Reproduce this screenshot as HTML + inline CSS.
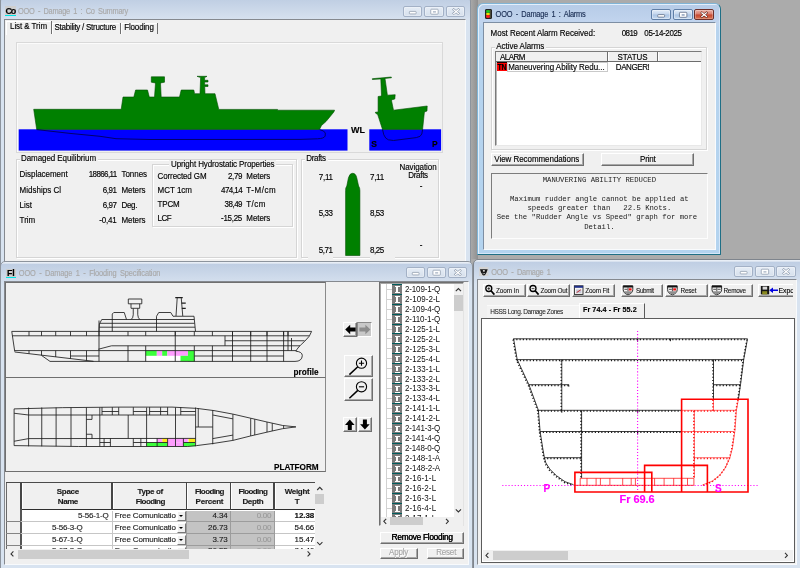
<!DOCTYPE html>
<html><head><meta charset="utf-8"><title>Damage Control</title>
<style>
html,body{margin:0;padding:0;}
body{width:800px;height:568px;overflow:hidden;background:#ababab;position:relative;font-family:"Liberation Sans",sans-serif;font-size:8px;line-height:10px;color:#000;}
div,svg{box-sizing:border-box;}
.t{position:absolute;white-space:nowrap;line-height:10px;-webkit-text-stroke:0.14px currentColor;}
.win{position:absolute;overflow:hidden;}
.frameI{background:linear-gradient(#e8eef6 0,#e8eef6 1.2px,#bfcee3 2px,#d5e0ee 21px,#d8e3f0 24px,#d8e3f0);border:1px solid #8d949d;border-radius:5px 5px 0 0;}
.frameA{background:linear-gradient(#b6cbe7 0,#c2d5ee 19px,#b7d3ee 24px,#b3d3ef);border:1px solid #3c7f98;border-radius:6px 6px 1px 1px;}
.client{position:absolute;background:#f0f0f0;overflow:hidden;}
.cb{position:absolute;height:11px;border:1px solid #9aa7b8;border-radius:2px;background:linear-gradient(#e9eff7,#d4deea);}
.btn{position:absolute;background:#f0f0f0;border-top:1px solid #fff;border-left:1px solid #fff;border-right:1px solid #6f6f6f;border-bottom:1px solid #6f6f6f;box-shadow:inset -1px -1px 0 #a8a8a8;}
.sunk{position:absolute;border-top:1px solid #828282;border-left:1px solid #828282;border-right:1px solid #fff;border-bottom:1px solid #fff;}
.grp{position:absolute;border:1px solid #d5d5d5;box-shadow:inset 1px 1px 0 #fff, 1px 1px 0 #fff;}
svg{position:absolute;overflow:visible;}
</style></head><body><div id="root" style="position:absolute;left:0;top:0;width:800px;height:568px;overflow:hidden;will-change:transform;">
<div style="position:absolute;left:470.5px;top:0px;width:7px;height:259px;background:linear-gradient(90deg,#a8a8a8,#8f8f8f);"></div>
<div class="win frameI" style="left:0;top:-4px;width:471px;height:270px;"></div>
<div style="position:absolute;left:5px;top:6px;width:10.5px;height:9.5px;background:#cfcfcf;"></div>
<div style="position:absolute;left:5px;top:14.6px;width:10.5px;height:1.4px;background:#00e5e5;"></div>
<div class="t" style="font-size:9px;font-weight:bold;letter-spacing:-1.098px;transform:scaleY(1.1);transform-origin:0 4.9px;left:5.40px;top:6.00px;">Co</div>
<div class="t" style="font-size:7.4px;color:#a9a9a9;word-spacing:1.6px;letter-spacing:-0.256px;transform:scaleY(1.17);transform-origin:0 4.9px;left:18.00px;top:7.00px;">OOO - Damage 1 : Co Summary</div>
<div class="cb" style="left:402.5px;top:5.8px;width:19.5px;height:11px;border-color:#a3b1c6;background:linear-gradient(#e6edf6,#d6e0ec);box-shadow:inset 0 0 0 0.6px rgba(255,255,255,0.55);"></div><div class="cb" style="left:424.2px;top:5.8px;width:19.5px;height:11px;border-color:#a3b1c6;background:linear-gradient(#e6edf6,#d6e0ec);box-shadow:inset 0 0 0 0.6px rgba(255,255,255,0.55);"></div><div class="cb" style="left:445.8px;top:5.8px;width:19.5px;height:11px;border-color:#a3b1c6;background:linear-gradient(#e6edf6,#d6e0ec);box-shadow:inset 0 0 0 0.6px rgba(255,255,255,0.55);"></div><svg style="left:402.5px;top:5.8px;" width="62.8" height="11"><rect x="6.35" y="5.4" width="6.8" height="2.5" rx="0.7" fill="#fff" stroke="#8693a6" stroke-width="0.7"/><rect x="27.75" y="3.2" width="7.4" height="5" rx="0.8" fill="#fff" stroke="#8693a6" stroke-width="0.7"/><rect x="29.95" y="5.1" width="3" height="1.5" fill="#b3bdcb"/><path d="M50.75,3.7 L55.35,7.5 M55.35,3.7 L50.75,7.5" stroke="#8693a6" stroke-width="2.3" stroke-linecap="square" fill="none"/><path d="M50.75,3.7 L55.35,7.5 M55.35,3.7 L50.75,7.5" stroke="#fff" stroke-width="1.25" stroke-linecap="square" fill="none"/></svg>
<div class="client" style="left:4px;top:18.5px;width:461.5px;height:243px;border:1px solid #85898f;border-right-color:#f8fafc;"></div>
<div style="position:absolute;left:6px;top:20.5px;width:45px;height:14px;border-left:1px solid #fff;border-top:1px solid #fff;"></div>
<div style="position:absolute;left:50.6px;top:21px;width:1px;height:12.5px;background:#6e6e6e;"></div>
<div style="position:absolute;left:52.2px;top:22.5px;width:1px;height:11px;background:#fff;"></div>
<div style="position:absolute;left:52.2px;top:22.5px;width:67px;height:1px;background:#fff;"></div>
<div style="position:absolute;left:119.6px;top:22.5px;width:1px;height:11px;background:#6e6e6e;"></div>
<div style="position:absolute;left:121.2px;top:22.5px;width:1px;height:11px;background:#fff;"></div>
<div style="position:absolute;left:121.2px;top:22.5px;width:36px;height:1px;background:#fff;"></div>
<div style="position:absolute;left:157.2px;top:22.5px;width:1px;height:11px;background:#6e6e6e;"></div>
<div class="t" style="font-size:8px;letter-spacing:-0.071px;transform:scaleY(1.17);transform-origin:0 4.9px;left:10.00px;top:22.40px;">List &amp; Trim</div>
<div class="t" style="font-size:8px;letter-spacing:-0.268px;transform:scaleY(1.17);transform-origin:0 4.9px;left:54.50px;top:23.20px;">Stability / Structure</div>
<div class="t" style="font-size:8px;letter-spacing:-0.148px;transform:scaleY(1.17);transform-origin:0 4.9px;left:124.20px;top:23.20px;">Flooding</div>
<div style="position:absolute;left:15.5px;top:42px;width:427.5px;height:111px;border:1px solid #d9d9d9;box-shadow:inset 1px 1px 0 #fbfbfb;"></div>
<svg style="left:0;top:0;" width="470" height="262" viewBox="0 0 470 262"><rect x="18.7" y="129.3" width="328.8" height="21.3" fill="#0000ff"/><rect x="369.3" y="129.3" width="71.8" height="21.3" fill="#0000ff"/><polygon points="33.7,109.3 121.2,109.3 123,97 133.8,97 135.6,90 147.5,90 149.3,97 154.5,97 155.5,83 151.3,82.2 151.3,76.8 164.5,76.8 164.5,82.2 160.5,83 161.2,97 179.5,97 181.2,90 193.8,90 194.6,93.7 200,93.7 200.6,77.6 197,76.3 207,76.3 204.6,77.6 204.6,80.3 208,80.3 208,82 204.6,82 204.6,84.8 208,84.8 208,86.5 204.7,86.5 205,93.7 215,93.7 218.8,109.4 277.5,109.4 277.5,110.2 334.6,110.2 333.8,112 331,115.5 326,121.5 321.5,125.5 319.5,129.4 36.7,129.4" fill="#008000" stroke="#004d00" stroke-width="0.6"/><path d="M36.7,129.6 L70,133.4 L100,136.3 L116,138.7 L150,139.5 L300,139.4 L317.5,138.8 Q324,138.6 325.2,136 Q326.2,132.5 323.5,131 L319.6,129.6" fill="none" stroke="#00005a" stroke-width="0.9"/><polygon points="372.3,78.7 391.3,77 391.4,77.8 385,78.4 387.4,95.2 395.2,94.7 394.8,99 391.4,100 393.5,110.2 427.2,106 427,111 424.4,112 422.6,129.4 382.5,129.4 377.7,114.6 375.4,113 375.5,112.2 378.1,112 378.1,96.5 381.5,96 380.8,78.9 372.4,79.5" fill="#008000" stroke="#004d00" stroke-width="0.6"/><path d="M382.5,129.5 L383.8,134.8 Q385.5,139 388.4,139.8 L393.5,140.5 L416.3,137.6 Q421,136.8 421.8,134 L422.6,129.5" fill="none" stroke="#00005a" stroke-width="0.9"/><path d="M345.6,255.5 L345.6,190.5 Q345.3,188 346.8,186 L348.4,178 Q349.5,173.3 352.6,173.3 Q355.9,173.3 356.8,178 L358.6,186 Q360,188 359.9,190.5 L359.9,255.5 Z" fill="#008000" stroke="#004d00" stroke-width="0.6"/></svg>
<div class="t" style="font-size:9px;font-weight:bold;letter-spacing:0.104px;left:351.00px;top:124.80px;">WL</div>
<div class="t" style="font-size:8.5px;font-weight:bold;letter-spacing:0.130px;left:371.30px;top:139.10px;">S</div>
<div class="t" style="font-size:8.5px;font-weight:bold;letter-spacing:0.130px;left:432.10px;top:139.10px;">P</div>
<div class="grp" style="left:15.5px;top:158.7px;width:281.5px;height:99.5px;"></div>
<div class="grp" style="left:151.7px;top:164.4px;width:141.8px;height:62.3px;"></div>
<div class="grp" style="left:300.5px;top:158.7px;width:138.4px;height:99.5px;"></div>
<div style="position:absolute;left:19.5px;top:154px;width:78px;height:9px;background:#f0f0f0;"></div>
<div style="position:absolute;left:169px;top:160px;width:107px;height:9px;background:#f0f0f0;"></div>
<div style="position:absolute;left:304.5px;top:154px;width:23px;height:9px;background:#f0f0f0;"></div>
<div class="t" style="font-size:8px;letter-spacing:-0.078px;transform:scaleY(1.17);transform-origin:0 4.9px;left:21.00px;top:154.00px;">Damaged Equilibrium</div>
<div class="t" style="font-size:8px;letter-spacing:-0.107px;transform:scaleY(1.17);transform-origin:0 4.9px;left:171.00px;top:159.50px;">Upright Hydrostatic Properties</div>
<div class="t" style="font-size:8px;letter-spacing:-0.339px;transform:scaleY(1.17);transform-origin:0 4.9px;left:306.30px;top:154.00px;">Drafts</div>
<div class="t" style="font-size:8px;letter-spacing:-0.039px;transform:scaleY(1.17);transform-origin:0 4.9px;left:19.60px;top:170.20px;">Displacement</div>
<div class="t" style="font-size:8px;letter-spacing:-0.616px;transform:scaleY(1.17);transform-origin:0 4.9px;left:88.76px;top:170.20px;">18866,11</div>
<div class="t" style="font-size:8px;letter-spacing:-0.049px;transform:scaleY(1.17);transform-origin:0 4.9px;left:121.50px;top:170.20px;">Tonnes</div>
<div class="t" style="font-size:8px;letter-spacing:0.014px;transform:scaleY(1.17);transform-origin:0 4.9px;left:19.60px;top:185.60px;">Midships Cl</div>
<div class="t" style="font-size:8px;letter-spacing:-0.412px;transform:scaleY(1.17);transform-origin:0 4.9px;left:102.68px;top:185.60px;">6,91</div>
<div class="t" style="font-size:8px;letter-spacing:-0.075px;transform:scaleY(1.17);transform-origin:0 4.9px;left:121.50px;top:185.60px;">Meters</div>
<div class="t" style="font-size:8px;letter-spacing:0.013px;transform:scaleY(1.17);transform-origin:0 4.9px;left:19.60px;top:200.60px;">List</div>
<div class="t" style="font-size:8px;letter-spacing:-0.412px;transform:scaleY(1.17);transform-origin:0 4.9px;left:102.68px;top:200.60px;">6,97</div>
<div class="t" style="font-size:8px;letter-spacing:-0.349px;transform:scaleY(1.17);transform-origin:0 4.9px;left:121.50px;top:200.60px;">Deg.</div>
<div class="t" style="font-size:8px;letter-spacing:-0.049px;transform:scaleY(1.17);transform-origin:0 4.9px;left:19.60px;top:215.60px;">Trim</div>
<div class="t" style="font-size:8px;letter-spacing:-0.167px;transform:scaleY(1.17);transform-origin:0 4.9px;left:99.20px;top:215.60px;">-0,41</div>
<div class="t" style="font-size:8px;letter-spacing:-0.075px;transform:scaleY(1.17);transform-origin:0 4.9px;left:121.50px;top:215.60px;">Meters</div>
<div class="t" style="font-size:8px;letter-spacing:-0.103px;transform:scaleY(1.17);transform-origin:0 4.9px;left:157.50px;top:171.80px;">Corrected GM</div>
<div class="t" style="font-size:8px;letter-spacing:-0.412px;transform:scaleY(1.17);transform-origin:0 4.9px;left:228.08px;top:171.80px;">2,79</div>
<div class="t" style="font-size:8px;letter-spacing:-0.075px;transform:scaleY(1.17);transform-origin:0 4.9px;left:246.30px;top:171.80px;">Meters</div>
<div class="t" style="font-size:8px;letter-spacing:-0.002px;transform:scaleY(1.17);transform-origin:0 4.9px;left:157.50px;top:185.60px;">MCT 1cm</div>
<div class="t" style="font-size:8px;letter-spacing:-0.598px;transform:scaleY(1.17);transform-origin:0 4.9px;left:221.12px;top:185.60px;">474,14</div>
<div class="t" style="font-size:8px;letter-spacing:0.557px;transform:scaleY(1.17);transform-origin:0 4.9px;left:246.30px;top:185.60px;">T-M/cm</div>
<div class="t" style="font-size:8px;letter-spacing:-0.166px;transform:scaleY(1.17);transform-origin:0 4.9px;left:157.50px;top:199.80px;">TPCM</div>
<div class="t" style="font-size:8px;letter-spacing:-0.523px;transform:scaleY(1.17);transform-origin:0 4.9px;left:224.60px;top:199.80px;">38,49</div>
<div class="t" style="font-size:8px;letter-spacing:0.432px;transform:scaleY(1.17);transform-origin:0 4.9px;left:246.30px;top:199.80px;">T/cm</div>
<div class="t" style="font-size:8px;letter-spacing:-0.538px;transform:scaleY(1.17);transform-origin:0 4.9px;left:157.50px;top:213.60px;">LCF</div>
<div class="t" style="font-size:8px;letter-spacing:-0.300px;transform:scaleY(1.17);transform-origin:0 4.9px;left:221.12px;top:213.60px;">-15,25</div>
<div class="t" style="font-size:8px;letter-spacing:-0.075px;transform:scaleY(1.17);transform-origin:0 4.9px;left:246.30px;top:213.60px;">Meters</div>
<div class="t" style="font-size:8px;letter-spacing:-0.294px;transform:scaleY(1.17);transform-origin:0 4.9px;left:318.80px;top:172.60px;">7,11</div>
<div class="t" style="font-size:8px;letter-spacing:-0.294px;transform:scaleY(1.17);transform-origin:0 4.9px;left:370.00px;top:172.60px;">7,11</div>
<div class="t" style="font-size:8px;letter-spacing:-0.442px;transform:scaleY(1.17);transform-origin:0 4.9px;left:318.80px;top:209.40px;">5,33</div>
<div class="t" style="font-size:8px;letter-spacing:-0.442px;transform:scaleY(1.17);transform-origin:0 4.9px;left:370.00px;top:209.40px;">8,53</div>
<div class="t" style="font-size:8px;letter-spacing:-0.442px;transform:scaleY(1.17);transform-origin:0 4.9px;left:318.80px;top:246.40px;">5,71</div>
<div class="t" style="font-size:8px;letter-spacing:-0.442px;transform:scaleY(1.17);transform-origin:0 4.9px;left:370.00px;top:246.40px;">8,25</div>
<div style="position:absolute;left:308px;top:257px;width:25px;height:3px;background:#f0f0f0;"></div>
<div style="position:absolute;left:370px;top:257px;width:25px;height:3px;background:#f0f0f0;"></div>
<div class="t" style="font-size:8px;letter-spacing:-0.080px;transform:scaleY(1.17);transform-origin:0 4.9px;left:399.50px;top:162.60px;">Navigation</div>
<div class="t" style="font-size:8px;letter-spacing:-0.306px;transform:scaleY(1.17);transform-origin:0 4.9px;left:408.25px;top:170.70px;">Drafts</div>
<div class="t" style="font-size:8px;transform:scaleY(1.17);transform-origin:0 4.9px;left:419.67px;top:182.20px;">-</div>
<div class="t" style="font-size:8px;transform:scaleY(1.17);transform-origin:0 4.9px;left:419.67px;top:241.20px;">-</div>
<div class="win frameA" style="left:476.5px;top:3px;width:244px;height:251.6px;border-color:#7fb4d6 #1f6f86 #1f6f86 #7fb4d6;box-shadow:inset 1px 1px 0 #e3effb,inset -1px -1px 0 #d5e6f8;"></div>
<div style="position:absolute;left:484.6px;top:9px;width:7.6px;height:10px;background:#4a4a38;border:0.5px solid #222;border-radius:1px;"></div>
<div style="position:absolute;left:486.3px;top:9.8px;width:4.2px;height:2.9px;background:#19c419;border-radius:50%;"></div>
<div style="position:absolute;left:486.3px;top:12.6px;width:4.2px;height:2.9px;background:#f2e000;border-radius:50%;"></div>
<div style="position:absolute;left:486.3px;top:15.4px;width:4.2px;height:2.9px;background:#ff1a1a;border-radius:50%;"></div>
<div class="t" style="font-size:7.4px;color:#1c2f55;word-spacing:1.6px;letter-spacing:-0.207px;transform:scaleY(1.17);transform-origin:0 4.9px;left:495.60px;top:9.90px;">OOO - Damage 1 : Alarms</div>
<div class="cb" style="left:651.2px;top:8.6px;width:20.3px;height:11.2px;border-color:#5f7ea6;background:linear-gradient(#e3edf9,#c3d5ec 48%,#aac3e3 52%,#c8dbf1);box-shadow:inset 0 0 0 0.6px rgba(255,255,255,0.6);"></div><div class="cb" style="left:673.2px;top:8.6px;width:20.3px;height:11.2px;border-color:#5f7ea6;background:linear-gradient(#e3edf9,#c3d5ec 48%,#aac3e3 52%,#c8dbf1);box-shadow:inset 0 0 0 0.6px rgba(255,255,255,0.6);"></div><div class="cb" style="left:694.2px;top:8.6px;width:20.3px;height:11.2px;border-color:#6d2f2a;background:linear-gradient(#eab1a6,#d97b6b 48%,#c4452f 52%,#d9724f);box-shadow:inset 0 0 0 0.6px rgba(255,255,255,0.45);"></div><svg style="left:651.2px;top:8.6px;" width="63.3" height="11.2"><rect x="6.75" y="5.6" width="6.8" height="2.5" rx="0.7" fill="#fff" stroke="#4f5f78" stroke-width="0.7"/><rect x="28.45" y="3.3" width="7.4" height="5" rx="0.8" fill="#fff" stroke="#4f5f78" stroke-width="0.7"/><rect x="30.65" y="5.2" width="3" height="1.5" fill="#8ea0bb"/><path d="M50.85,3.8 L55.45,7.6 M55.45,3.8 L50.85,7.6" stroke="#5a1c15" stroke-width="2.3" stroke-linecap="square" fill="none"/><path d="M50.85,3.8 L55.45,7.6 M55.45,3.8 L50.85,7.6" stroke="#fff" stroke-width="1.25" stroke-linecap="square" fill="none"/></svg>
<div class="client" style="left:482.6px;top:22px;width:233.2px;height:228.2px;border:1px solid #7d8ea3;border-right-color:#f9fbfd;border-bottom-color:#f9fbfd;"></div>
<div class="t" style="font-size:8px;letter-spacing:-0.032px;transform:scaleY(1.17);transform-origin:0 4.9px;left:490.60px;top:28.60px;">Most Recent Alarm Received:</div>
<div class="t" style="font-size:8px;letter-spacing:-0.649px;transform:scaleY(1.17);transform-origin:0 4.9px;left:621.80px;top:28.60px;">0819</div>
<div class="t" style="font-size:8px;letter-spacing:-0.352px;transform:scaleY(1.17);transform-origin:0 4.9px;left:644.30px;top:28.60px;">05-14-2025</div>
<div class="grp" style="left:491.2px;top:47.2px;width:216px;height:102.4px;"></div>
<div style="position:absolute;left:495px;top:42px;width:51px;height:9px;background:#f0f0f0;"></div>
<div class="t" style="font-size:8px;letter-spacing:-0.035px;transform:scaleY(1.17);transform-origin:0 4.9px;left:496.30px;top:42.00px;">Active Alarms</div>
<div class="sunk" style="left:494.6px;top:51px;width:207.4px;height:94.8px;background:#fff;border-color:#7a7a7a #e8e8e8 #e8e8e8 #7a7a7a;box-shadow:inset 1px 1px 0 #b8b8b8;"></div>
<div style="position:absolute;left:496px;top:52.2px;width:205px;height:9.4px;background:#f0f0f0;border-bottom:1px solid #6d6d6d;"></div>
<div style="position:absolute;left:607.2px;top:52.4px;width:1px;height:8.6px;background:#6d6d6d;"></div>
<div style="position:absolute;left:656.8px;top:52.4px;width:1px;height:8.6px;background:#6d6d6d;"></div>
<div style="position:absolute;left:608.4px;top:52.4px;width:1px;height:8.6px;background:#fff;"></div>
<div style="position:absolute;left:658px;top:52.4px;width:1px;height:8.6px;background:#fff;"></div>
<div class="t" style="font-size:8px;letter-spacing:-0.512px;transform:scaleY(1.17);transform-origin:0 4.9px;left:500.00px;top:52.50px;">ALARM</div>
<div class="t" style="font-size:8px;letter-spacing:-0.062px;transform:scaleY(1.17);transform-origin:0 4.9px;left:617.50px;top:52.50px;">STATUS</div>
<div style="position:absolute;left:497px;top:62.2px;width:9.6px;height:9px;background:#ff0000;border-top:1.6px solid #1a0000;"></div>
<div class="t" style="font-size:7px;font-weight:bold;letter-spacing:-0.465px;transform:scaleY(1.17);transform-origin:0 4.9px;left:497.60px;top:62.60px;">TN</div>
<div style="position:absolute;left:506.6px;top:61.8px;width:101.2px;height:10.6px;border:1px solid #c9c9c9;"></div>
<div class="t" style="font-size:8px;letter-spacing:-0.033px;transform:scaleY(1.17);transform-origin:0 4.9px;left:508.20px;top:62.60px;">Maneuvering Ability Redu...</div>
<div class="t" style="font-size:8px;letter-spacing:-0.421px;transform:scaleY(1.17);transform-origin:0 4.9px;left:615.80px;top:62.60px;">DANGER!</div>
<div class="btn" style="left:491.2px;top:153px;width:92.6px;height:12.6px;"></div>
<div class="btn" style="left:601.2px;top:153px;width:92.6px;height:12.6px;"></div>
<div class="t" style="font-size:8px;letter-spacing:-0.056px;transform:scaleY(1.17);transform-origin:0 4.9px;left:494.30px;top:155.10px;">View Recommendations</div>
<div class="t" style="font-size:8px;letter-spacing:-0.170px;transform:scaleY(1.17);transform-origin:0 4.9px;left:640.00px;top:155.10px;">Print</div>
<div class="sunk" style="left:491.2px;top:172.6px;width:216.4px;height:66.8px;border-color:#7c7c7c #fdfdfd #fdfdfd #7c7c7c;border-top-width:1.6px;border-left-width:1.3px;"></div>
<div class="t" style="font-size:7.27px;font-family:'Liberation Mono',monospace;-webkit-text-stroke:0;color:#1a1a1a;left:542.68px;top:174.90px;white-space:pre;">MANUVERING ABILITY REDUCED</div>
<div class="t" style="font-size:7.27px;font-family:'Liberation Mono',monospace;-webkit-text-stroke:0;color:#1a1a1a;left:509.96px;top:193.60px;white-space:pre;">Maximum rudder angle cannot be applied at</div>
<div class="t" style="font-size:7.27px;font-family:'Liberation Mono',monospace;-webkit-text-stroke:0;color:#1a1a1a;left:527.41px;top:203.10px;white-space:pre;">speeds greater than   22.5 Knots.</div>
<div class="t" style="font-size:7.27px;font-family:'Liberation Mono',monospace;-webkit-text-stroke:0;color:#1a1a1a;left:496.65px;top:212.40px;white-space:pre;">See the "Rudder Angle vs Speed" graph for more</div>
<div class="t" style="font-size:7.27px;font-family:'Liberation Mono',monospace;-webkit-text-stroke:0;color:#1a1a1a;left:584.13px;top:221.80px;white-space:pre;">Detail.</div>
<div class="win frameI" style="left:0;top:261.3px;width:472.6px;height:312px;"></div>
<div style="position:absolute;left:6.1px;top:268.5px;width:9.8px;height:8.8px;background:#cdcdcd;"></div>
<div style="position:absolute;left:6.1px;top:276.9px;width:9.8px;height:1.5px;background:#00e5e5;"></div>
<div class="t" style="font-size:8.8px;font-weight:bold;letter-spacing:-0.110px;transform:scaleY(1.1);transform-origin:0 4.9px;left:7.00px;top:267.50px;">Fl</div>
<div class="t" style="font-size:7.4px;color:#a9a9a9;word-spacing:1.6px;letter-spacing:-0.124px;transform:scaleY(1.17);transform-origin:0 4.9px;left:18.80px;top:269.20px;">OOO - Damage 1 - Flooding Specification</div>
<div class="cb" style="left:405.6px;top:267.4px;width:19.3px;height:11px;border-color:#a3b1c6;background:linear-gradient(#e6edf6,#d6e0ec);box-shadow:inset 0 0 0 0.6px rgba(255,255,255,0.55);"></div><div class="cb" style="left:426.6px;top:267.4px;width:19.3px;height:11px;border-color:#a3b1c6;background:linear-gradient(#e6edf6,#d6e0ec);box-shadow:inset 0 0 0 0.6px rgba(255,255,255,0.55);"></div><div class="cb" style="left:447.8px;top:267.4px;width:19.3px;height:11px;border-color:#a3b1c6;background:linear-gradient(#e6edf6,#d6e0ec);box-shadow:inset 0 0 0 0.6px rgba(255,255,255,0.55);"></div><svg style="left:405.6px;top:267.4px;" width="61.5" height="11"><rect x="6.25" y="5.4" width="6.8" height="2.5" rx="0.7" fill="#fff" stroke="#8693a6" stroke-width="0.7"/><rect x="26.95" y="3.2" width="7.4" height="5" rx="0.8" fill="#fff" stroke="#8693a6" stroke-width="0.7"/><rect x="29.15" y="5.1" width="3" height="1.5" fill="#b3bdcb"/><path d="M49.55,3.7 L54.15,7.5 M54.15,3.7 L49.55,7.5" stroke="#8693a6" stroke-width="2.3" stroke-linecap="square" fill="none"/><path d="M49.55,3.7 L54.15,7.5 M54.15,3.7 L49.55,7.5" stroke="#fff" stroke-width="1.25" stroke-linecap="square" fill="none"/></svg>
<div class="client" style="left:4.4px;top:281px;width:465px;height:283.6px;border:1px solid #85898f;border-right-color:#f8fafc;border-bottom-color:#f8fafc;"></div>
<div style="position:absolute;left:5.4px;top:282px;width:320.8px;height:95.6px;border:1px solid #6f6f6f;border-right-color:#8a8a8a;"></div>
<div style="position:absolute;left:5.4px;top:376.6px;width:320.8px;height:95px;border:1px solid #6f6f6f;border-right-color:#8a8a8a;"></div>
<svg style="left:0;top:262px;" width="470" height="306" viewBox="0 262 470 306"><rect x="145.7" y="350.6" width="48.6" height="10.8" fill="#fff"/><rect x="145.7" y="350.6" width="11.1" height="5.2" fill="#3cff3c"/><rect x="156.8" y="350.6" width="5.4" height="5.2" fill="#ff9dff"/><rect x="162.2" y="350.6" width="5.1" height="5.2" fill="#3cff3c"/><rect x="167.3" y="350.6" width="20.7" height="5.2" fill="#ff9dff"/><rect x="188" y="350.6" width="6.3" height="10.8" fill="#3cff3c"/><rect x="180.5" y="355.8" width="13.8" height="5.6" fill="#3cff3c"/><rect x="146.6" y="438.4" width="10.5" height="4.1" fill="#fff"/><rect x="146.6" y="442.5" width="21" height="4" fill="#3cff3c"/><rect x="157.1" y="438.4" width="5.3" height="4.1" fill="#ff9dff"/><rect x="162.4" y="438.4" width="5.2" height="3.9" fill="#ffe81a"/><rect x="167.6" y="438.4" width="7.9" height="8.1" fill="#ff9dff"/><rect x="175.5" y="438.4" width="12.3" height="4.1" fill="#ff9dff"/><rect x="175.5" y="442.5" width="7.9" height="4" fill="#ff9dff"/><rect x="188.6" y="438.4" width="6.5" height="3.9" fill="#ffe81a"/><rect x="183.4" y="442.5" width="11.7" height="3.8" fill="#3cff3c"/><path d="M11.75,331.4 L311.6,331.4 M12.3,335.8 L309,335.8 M11.75,331.4 L14.75,351.6 M14.75,350.6 L296,350.6 M14.75,352 L93.5,361.3 M41.5,355.4 L50,361.4 M50,361.4 L295,361.4 M70.5,356 L99,356 M194.4,356 L283.6,356 M29,331.4 L29,335.8 M41.5,331.4 L41.5,335.8 M55.7,331.4 L55.7,335.8 M70.5,331.4 L70.5,335.8 M86.5,331.4 L86.5,335.8 M99,331.4 L99,335.8 M128,331.4 L128,335.8 M145.7,331.4 L145.7,335.8 M175.25,331.4 L175.25,335.8 M194.3,331.4 L194.3,335.8 M212.4,331.4 L212.4,335.8 M232.5,331.4 L232.5,335.8 M250.7,331.4 L250.7,335.8 M267,331.4 L267,335.8 M283.6,331.4 L283.6,335.8 M288,331.4 L288,335.8 M29,350.6 L29,353.7 M41.5,350.6 L41.5,355.3 M55.7,350.6 L55.7,357 M70.5,350.6 L70.5,358.7 M86.5,350.6 L86.5,360.5 M99,320.5 L99,361.4 M99,331.4 L99.4,324 L101.75,319.5 L194.2,319.5 M100,323.3 L194.5,323.3 M99.4,327.2 L195,327.2 M112.25,331.4 L112.25,314 L113.75,312.5 L124.25,312.5 L126.5,319.5 M131,319.5 Q133,318.5 133.25,314.8 L133.25,308.4 M137.75,308.4 L137.75,314.8 Q138,318.5 140,319.5 M128.3,299 H141.8 V303.8 H128.3 Z M131,303.8 V308.3 H139.7 V303.8 M156.5,331.4 L156.5,316.25 L158.75,312.5 L170.75,312.5 L173,316.25 L194,316.25 L195.5,331.4 M177.2,298 L176,316 M181.25,298 L182.75,316 M98.3,349.25 L111.5,345.8 L300,345.8 M128,345.8 L128,361.4 M145.7,345.8 L145.7,361.4 M194.3,345.8 L194.3,361.4 M212.4,345.8 L212.4,361.4 M175.25,331.4 L175.25,361.4 M232.5,331.4 L232.5,361.4 M250.7,331.4 L250.7,361.4 M267,331.4 L267,361.4 M283.6,331.4 L283.6,361.4 M288,331.4 L288,350.6 M291.5,338 L291.5,350.6 M225,340.75 L304.6,340.75 M225,335.8 L225,345.8 M311.6,331.4 Q310.5,336 304.5,341.5 Q297.5,347.5 295.9,351.2 Q302.3,351.8 302.3,355.6 Q302,361.4 295,361.4 M14.1,408.9 L62.75,407.65 L118.75,407.1 L172,407.1 L196.5,408.35 L214,410.6 L232.9,414.1 L250.4,418.15 L267,422 L282.75,425.5 L295.9,426.9 M14.1,445.6 L78.5,446.5 L187.75,446.5 L196.5,445.6 L214,443.35 L232.9,440.4 L250.4,436 L267,432.15 L282.75,428.65 L295.9,426.9 M14.1,408.9 L14.1,445.6 M14.1,413.25 L28.6,415 L195.6,415 M14.1,441.25 L28.6,438.6 L195.6,438.4 M28.6,407.5 L28.6,446.3 M41.75,407.5 L41.75,446.3 M56.1,407.5 L56.1,446.3 M71,407.5 L71,446.3 M86.4,407.5 L86.4,446.3 M99.8,407.5 L99.8,446.3 M146.6,407.5 L146.6,446.3 M175.5,407.5 L175.5,446.3 M195.6,407.5 L195.6,446.3 M86.4,419.4 L92,419.4 L92,415 M86.4,434.25 L92,434.25 L92,438.6 M128.2,415 L128.2,438.4 M102,407.2 L102,415 M112.3,407.2 L112.3,415 M118.7,407.2 L118.7,415 M133.3,407.2 L133.3,415 M149.6,407.2 L149.6,415 M160.6,407.2 L160.6,415 M167.6,407.2 L167.6,415 M180.75,407.2 L180.75,415 M102,411.5 L118.7,411.5 M133.3,411.5 L146.6,411.5 M149.6,411.5 L167.6,411.5 M180.75,411.5 L195.6,411.5 M104.1,438.4 L104.1,446.4 M110.4,438.4 L110.4,446.4 M133.3,438.4 L133.3,446.4 M140.85,438.4 L140.85,446.4 M157.1,438.4 L157.1,446.4 M167.6,438.4 L167.6,446.4 M183.4,438.4 L183.4,446.4 M99.8,442.5 L110.4,442.5 M133.3,442.5 L167.6,442.5 M183.4,442.5 L195,442.5 M198.25,408.4 L198.25,427 M195.6,427 L212.75,427 M212.75,410.2 L212.75,444.3 M212.75,415 L232.9,418.85 M212.75,438.6 L232.9,435.1 M232.9,414.1 L232.9,440.4 M250.7,418.2 L250.7,436 M254.75,419.2 L254.75,435 M267,422 L267,432.1 M272.25,423.2 L272.25,431 M283.6,425.7 L283.6,428.5" fill="none" stroke="#1e1e1e" stroke-width="0.85"/><path d="M175.25,297.6 H182.75 M181.5,303.2 H185.75 M181.8,308.3 H185.75" fill="none" stroke="#1e1e1e" stroke-width="1.3"/></svg>
<div class="t" style="font-size:8.2px;font-weight:bold;letter-spacing:-0.008px;left:293.60px;top:367.60px;">profile</div>
<div class="t" style="font-size:8.2px;font-weight:bold;letter-spacing:-0.042px;transform:scaleY(1.06);transform-origin:0 4.9px;left:274.00px;top:462.50px;">PLATFORM</div>
<div class="btn" style="left:343px;top:322.2px;width:14px;height:15px;"></div>
<div style="position:absolute;left:357px;top:322.2px;width:15.2px;height:15px;background:#c8c8c8;border:1px solid #fff;border-top-color:#8a8a8a;border-left-color:#8a8a8a;"></div>
<div class="btn" style="left:344.4px;top:354.5px;width:28.4px;height:22.6px;"></div>
<div class="btn" style="left:344.4px;top:377.6px;width:28.4px;height:23.6px;"></div>
<div class="btn" style="left:343px;top:417px;width:13.6px;height:15.4px;"></div>
<div class="btn" style="left:358px;top:417px;width:13.8px;height:15.4px;"></div>
<svg style="left:0;top:262px;" width="470" height="306" viewBox="0 262 470 306"><path d="M345.2,329.5 L350.2,324.8 V327.6 H355.6 V331.4 H350.2 V334.2 Z" fill="#000"/><path d="M370.4,329.5 L365.4,324.8 V327.6 H359.4 V331.4 H365.4 V334.2 Z" fill="#8c8c8c"/><circle cx="361.5" cy="363.2" r="5.1" fill="none" stroke="#000" stroke-width="1.1"/><path d="M357.8,366.8 L349.4,374.6" stroke="#000" stroke-width="1.5" fill="none"/><path d="M358.9,363.2 H364.1 M361.5,360.6 V365.8" stroke="#000" stroke-width="1.1"/><circle cx="361.5" cy="386.8" r="5.1" fill="none" stroke="#000" stroke-width="1.1"/><path d="M357.8,390.4 L349.4,398.2" stroke="#000" stroke-width="1.5" fill="none"/><path d="M358.9,386.8 H364.1" stroke="#000" stroke-width="1.1"/><path d="M349.8,419.6 L354.6,425 H351.8 V430 H347.8 V425 H345 Z" fill="#000"/><path d="M364.9,429.6 L369.7,424.2 H366.9 V419.6 H362.9 V424.2 H360.1 Z" fill="#000"/></svg>
<div class="sunk" style="left:379.4px;top:282.4px;width:84.4px;height:243.8px;background:#fff;border-color:#6f6f6f #e3e3e3 #e3e3e3 #6f6f6f;box-shadow:inset 1px 1px 0 #a5a5a5;"></div>
<div style="position:absolute;left:453.8px;top:284.2px;width:9.4px;height:232.4px;background:#f0f0f0;"></div>
<div style="position:absolute;left:381.2px;top:516.6px;width:82px;height:9px;background:#f0f0f0;"></div>
<div style="position:absolute;left:454px;top:295px;width:8.8px;height:15.6px;background:#cdcdcd;"></div>
<div style="position:absolute;left:390.4px;top:517.4px;width:33px;height:8px;background:#cdcdcd;"></div>
<div style="position:absolute;left:381px;top:284px;width:72.8px;height:232.6px;overflow:hidden;"><div style="position:absolute;left:5px;top:0;width:1px;height:233px;background:#d2d2d2;"></div><div style="position:absolute;left:5px;top:4.70px;width:7px;height:1px;background:#d2d2d2;"></div><div style="position:absolute;left:11.1px;top:-0.30px;width:9.9px;height:10.2px;background:#7b7b7b;border-top:1.3px solid #005c5c;"></div><div style="position:absolute;left:13.5px;top:2.40px;width:5.2px;height:6.6px;border-top:1.1px solid #fff;border-bottom:1.1px solid #fff;"><div style="position:absolute;left:1.8px;top:0;width:1.6px;height:4.4px;background:#fff;"></div></div><div class="t" style="left:24px;top:0.90px;letter-spacing:-0.151px;transform:scaleY(1.12);transform-origin:0 4.9px;-webkit-text-stroke:0;color:#111;">2-109-1-Q</div><div style="position:absolute;left:5px;top:14.65px;width:7px;height:1px;background:#d2d2d2;"></div><div style="position:absolute;left:11.1px;top:9.65px;width:9.9px;height:10.2px;background:#7b7b7b;border-top:1.3px solid #005c5c;"></div><div style="position:absolute;left:13.5px;top:12.35px;width:5.2px;height:6.6px;border-top:1.1px solid #fff;border-bottom:1.1px solid #fff;"><div style="position:absolute;left:1.8px;top:0;width:1.6px;height:4.4px;background:#fff;"></div></div><div class="t" style="left:24px;top:10.85px;letter-spacing:0.046px;transform:scaleY(1.12);transform-origin:0 4.9px;-webkit-text-stroke:0;color:#111;">2-109-2-L</div><div style="position:absolute;left:5px;top:24.61px;width:7px;height:1px;background:#d2d2d2;"></div><div style="position:absolute;left:11.1px;top:19.61px;width:9.9px;height:10.2px;background:#7b7b7b;border-top:1.3px solid #005c5c;"></div><div style="position:absolute;left:13.5px;top:22.31px;width:5.2px;height:6.6px;border-top:1.1px solid #fff;border-bottom:1.1px solid #fff;"><div style="position:absolute;left:1.8px;top:0;width:1.6px;height:4.4px;background:#fff;"></div></div><div class="t" style="left:24px;top:20.81px;letter-spacing:-0.151px;transform:scaleY(1.12);transform-origin:0 4.9px;-webkit-text-stroke:0;color:#111;">2-109-4-Q</div><div style="position:absolute;left:5px;top:34.57px;width:7px;height:1px;background:#d2d2d2;"></div><div style="position:absolute;left:11.1px;top:29.57px;width:9.9px;height:10.2px;background:#7b7b7b;border-top:1.3px solid #005c5c;"></div><div style="position:absolute;left:13.5px;top:32.27px;width:5.2px;height:6.6px;border-top:1.1px solid #fff;border-bottom:1.1px solid #fff;"><div style="position:absolute;left:1.8px;top:0;width:1.6px;height:4.4px;background:#fff;"></div></div><div class="t" style="left:24px;top:30.77px;letter-spacing:-0.085px;transform:scaleY(1.12);transform-origin:0 4.9px;-webkit-text-stroke:0;color:#111;">2-110-1-Q</div><div style="position:absolute;left:5px;top:44.52px;width:7px;height:1px;background:#d2d2d2;"></div><div style="position:absolute;left:11.1px;top:39.52px;width:9.9px;height:10.2px;background:#7b7b7b;border-top:1.3px solid #005c5c;"></div><div style="position:absolute;left:13.5px;top:42.22px;width:5.2px;height:6.6px;border-top:1.1px solid #fff;border-bottom:1.1px solid #fff;"><div style="position:absolute;left:1.8px;top:0;width:1.6px;height:4.4px;background:#fff;"></div></div><div class="t" style="left:24px;top:40.72px;letter-spacing:0.046px;transform:scaleY(1.12);transform-origin:0 4.9px;-webkit-text-stroke:0;color:#111;">2-125-1-L</div><div style="position:absolute;left:5px;top:54.47px;width:7px;height:1px;background:#d2d2d2;"></div><div style="position:absolute;left:11.1px;top:49.47px;width:9.9px;height:10.2px;background:#7b7b7b;border-top:1.3px solid #005c5c;"></div><div style="position:absolute;left:13.5px;top:52.17px;width:5.2px;height:6.6px;border-top:1.1px solid #fff;border-bottom:1.1px solid #fff;"><div style="position:absolute;left:1.8px;top:0;width:1.6px;height:4.4px;background:#fff;"></div></div><div class="t" style="left:24px;top:50.67px;letter-spacing:0.046px;transform:scaleY(1.12);transform-origin:0 4.9px;-webkit-text-stroke:0;color:#111;">2-125-2-L</div><div style="position:absolute;left:5px;top:64.43px;width:7px;height:1px;background:#d2d2d2;"></div><div style="position:absolute;left:11.1px;top:59.43px;width:9.9px;height:10.2px;background:#7b7b7b;border-top:1.3px solid #005c5c;"></div><div style="position:absolute;left:13.5px;top:62.13px;width:5.2px;height:6.6px;border-top:1.1px solid #fff;border-bottom:1.1px solid #fff;"><div style="position:absolute;left:1.8px;top:0;width:1.6px;height:4.4px;background:#fff;"></div></div><div class="t" style="left:24px;top:60.63px;letter-spacing:0.046px;transform:scaleY(1.12);transform-origin:0 4.9px;-webkit-text-stroke:0;color:#111;">2-125-3-L</div><div style="position:absolute;left:5px;top:74.39px;width:7px;height:1px;background:#d2d2d2;"></div><div style="position:absolute;left:11.1px;top:69.39px;width:9.9px;height:10.2px;background:#7b7b7b;border-top:1.3px solid #005c5c;"></div><div style="position:absolute;left:13.5px;top:72.09px;width:5.2px;height:6.6px;border-top:1.1px solid #fff;border-bottom:1.1px solid #fff;"><div style="position:absolute;left:1.8px;top:0;width:1.6px;height:4.4px;background:#fff;"></div></div><div class="t" style="left:24px;top:70.59px;letter-spacing:0.046px;transform:scaleY(1.12);transform-origin:0 4.9px;-webkit-text-stroke:0;color:#111;">2-125-4-L</div><div style="position:absolute;left:5px;top:84.34px;width:7px;height:1px;background:#d2d2d2;"></div><div style="position:absolute;left:11.1px;top:79.34px;width:9.9px;height:10.2px;background:#7b7b7b;border-top:1.3px solid #005c5c;"></div><div style="position:absolute;left:13.5px;top:82.04px;width:5.2px;height:6.6px;border-top:1.1px solid #fff;border-bottom:1.1px solid #fff;"><div style="position:absolute;left:1.8px;top:0;width:1.6px;height:4.4px;background:#fff;"></div></div><div class="t" style="left:24px;top:80.54px;letter-spacing:0.046px;transform:scaleY(1.12);transform-origin:0 4.9px;-webkit-text-stroke:0;color:#111;">2-133-1-L</div><div style="position:absolute;left:5px;top:94.30px;width:7px;height:1px;background:#d2d2d2;"></div><div style="position:absolute;left:11.1px;top:89.30px;width:9.9px;height:10.2px;background:#7b7b7b;border-top:1.3px solid #005c5c;"></div><div style="position:absolute;left:13.5px;top:92.00px;width:5.2px;height:6.6px;border-top:1.1px solid #fff;border-bottom:1.1px solid #fff;"><div style="position:absolute;left:1.8px;top:0;width:1.6px;height:4.4px;background:#fff;"></div></div><div class="t" style="left:24px;top:90.50px;letter-spacing:0.046px;transform:scaleY(1.12);transform-origin:0 4.9px;-webkit-text-stroke:0;color:#111;">2-133-2-L</div><div style="position:absolute;left:5px;top:104.25px;width:7px;height:1px;background:#d2d2d2;"></div><div style="position:absolute;left:11.1px;top:99.25px;width:9.9px;height:10.2px;background:#7b7b7b;border-top:1.3px solid #005c5c;"></div><div style="position:absolute;left:13.5px;top:101.95px;width:5.2px;height:6.6px;border-top:1.1px solid #fff;border-bottom:1.1px solid #fff;"><div style="position:absolute;left:1.8px;top:0;width:1.6px;height:4.4px;background:#fff;"></div></div><div class="t" style="left:24px;top:100.45px;letter-spacing:0.046px;transform:scaleY(1.12);transform-origin:0 4.9px;-webkit-text-stroke:0;color:#111;">2-133-3-L</div><div style="position:absolute;left:5px;top:114.20px;width:7px;height:1px;background:#d2d2d2;"></div><div style="position:absolute;left:11.1px;top:109.20px;width:9.9px;height:10.2px;background:#7b7b7b;border-top:1.3px solid #005c5c;"></div><div style="position:absolute;left:13.5px;top:111.91px;width:5.2px;height:6.6px;border-top:1.1px solid #fff;border-bottom:1.1px solid #fff;"><div style="position:absolute;left:1.8px;top:0;width:1.6px;height:4.4px;background:#fff;"></div></div><div class="t" style="left:24px;top:110.41px;letter-spacing:0.046px;transform:scaleY(1.12);transform-origin:0 4.9px;-webkit-text-stroke:0;color:#111;">2-133-4-L</div><div style="position:absolute;left:5px;top:124.16px;width:7px;height:1px;background:#d2d2d2;"></div><div style="position:absolute;left:11.1px;top:119.16px;width:9.9px;height:10.2px;background:#7b7b7b;border-top:1.3px solid #005c5c;"></div><div style="position:absolute;left:13.5px;top:121.86px;width:5.2px;height:6.6px;border-top:1.1px solid #fff;border-bottom:1.1px solid #fff;"><div style="position:absolute;left:1.8px;top:0;width:1.6px;height:4.4px;background:#fff;"></div></div><div class="t" style="left:24px;top:120.36px;letter-spacing:0.046px;transform:scaleY(1.12);transform-origin:0 4.9px;-webkit-text-stroke:0;color:#111;">2-141-1-L</div><div style="position:absolute;left:5px;top:134.11px;width:7px;height:1px;background:#d2d2d2;"></div><div style="position:absolute;left:11.1px;top:129.11px;width:9.9px;height:10.2px;background:#7b7b7b;border-top:1.3px solid #005c5c;"></div><div style="position:absolute;left:13.5px;top:131.81px;width:5.2px;height:6.6px;border-top:1.1px solid #fff;border-bottom:1.1px solid #fff;"><div style="position:absolute;left:1.8px;top:0;width:1.6px;height:4.4px;background:#fff;"></div></div><div class="t" style="left:24px;top:130.31px;letter-spacing:0.046px;transform:scaleY(1.12);transform-origin:0 4.9px;-webkit-text-stroke:0;color:#111;">2-141-2-L</div><div style="position:absolute;left:5px;top:144.07px;width:7px;height:1px;background:#d2d2d2;"></div><div style="position:absolute;left:11.1px;top:139.07px;width:9.9px;height:10.2px;background:#7b7b7b;border-top:1.3px solid #005c5c;"></div><div style="position:absolute;left:13.5px;top:141.77px;width:5.2px;height:6.6px;border-top:1.1px solid #fff;border-bottom:1.1px solid #fff;"><div style="position:absolute;left:1.8px;top:0;width:1.6px;height:4.4px;background:#fff;"></div></div><div class="t" style="left:24px;top:140.27px;letter-spacing:-0.151px;transform:scaleY(1.12);transform-origin:0 4.9px;-webkit-text-stroke:0;color:#111;">2-141-3-Q</div><div style="position:absolute;left:5px;top:154.02px;width:7px;height:1px;background:#d2d2d2;"></div><div style="position:absolute;left:11.1px;top:149.02px;width:9.9px;height:10.2px;background:#7b7b7b;border-top:1.3px solid #005c5c;"></div><div style="position:absolute;left:13.5px;top:151.72px;width:5.2px;height:6.6px;border-top:1.1px solid #fff;border-bottom:1.1px solid #fff;"><div style="position:absolute;left:1.8px;top:0;width:1.6px;height:4.4px;background:#fff;"></div></div><div class="t" style="left:24px;top:150.22px;letter-spacing:-0.151px;transform:scaleY(1.12);transform-origin:0 4.9px;-webkit-text-stroke:0;color:#111;">2-141-4-Q</div><div style="position:absolute;left:5px;top:163.98px;width:7px;height:1px;background:#d2d2d2;"></div><div style="position:absolute;left:11.1px;top:158.98px;width:9.9px;height:10.2px;background:#7b7b7b;border-top:1.3px solid #005c5c;"></div><div style="position:absolute;left:13.5px;top:161.68px;width:5.2px;height:6.6px;border-top:1.1px solid #fff;border-bottom:1.1px solid #fff;"><div style="position:absolute;left:1.8px;top:0;width:1.6px;height:4.4px;background:#fff;"></div></div><div class="t" style="left:24px;top:160.18px;letter-spacing:-0.151px;transform:scaleY(1.12);transform-origin:0 4.9px;-webkit-text-stroke:0;color:#111;">2-148-0-Q</div><div style="position:absolute;left:5px;top:173.94px;width:7px;height:1px;background:#d2d2d2;"></div><div style="position:absolute;left:11.1px;top:168.94px;width:9.9px;height:10.2px;background:#7b7b7b;border-top:1.3px solid #005c5c;"></div><div style="position:absolute;left:13.5px;top:171.64px;width:5.2px;height:6.6px;border-top:1.1px solid #fff;border-bottom:1.1px solid #fff;"><div style="position:absolute;left:1.8px;top:0;width:1.6px;height:4.4px;background:#fff;"></div></div><div class="t" style="left:24px;top:170.14px;letter-spacing:-0.052px;transform:scaleY(1.12);transform-origin:0 4.9px;-webkit-text-stroke:0;color:#111;">2-148-1-A</div><div style="position:absolute;left:5px;top:183.89px;width:7px;height:1px;background:#d2d2d2;"></div><div style="position:absolute;left:11.1px;top:178.89px;width:9.9px;height:10.2px;background:#7b7b7b;border-top:1.3px solid #005c5c;"></div><div style="position:absolute;left:13.5px;top:181.59px;width:5.2px;height:6.6px;border-top:1.1px solid #fff;border-bottom:1.1px solid #fff;"><div style="position:absolute;left:1.8px;top:0;width:1.6px;height:4.4px;background:#fff;"></div></div><div class="t" style="left:24px;top:180.09px;letter-spacing:-0.052px;transform:scaleY(1.12);transform-origin:0 4.9px;-webkit-text-stroke:0;color:#111;">2-148-2-A</div><div style="position:absolute;left:5px;top:193.84px;width:7px;height:1px;background:#d2d2d2;"></div><div style="position:absolute;left:11.1px;top:188.84px;width:9.9px;height:10.2px;background:#7b7b7b;border-top:1.3px solid #005c5c;"></div><div style="position:absolute;left:13.5px;top:191.54px;width:5.2px;height:6.6px;border-top:1.1px solid #fff;border-bottom:1.1px solid #fff;"><div style="position:absolute;left:1.8px;top:0;width:1.6px;height:4.4px;background:#fff;"></div></div><div class="t" style="left:24px;top:190.04px;letter-spacing:0.121px;transform:scaleY(1.12);transform-origin:0 4.9px;-webkit-text-stroke:0;color:#111;">2-16-1-L</div><div style="position:absolute;left:5px;top:203.80px;width:7px;height:1px;background:#d2d2d2;"></div><div style="position:absolute;left:11.1px;top:198.80px;width:9.9px;height:10.2px;background:#7b7b7b;border-top:1.3px solid #005c5c;"></div><div style="position:absolute;left:13.5px;top:201.50px;width:5.2px;height:6.6px;border-top:1.1px solid #fff;border-bottom:1.1px solid #fff;"><div style="position:absolute;left:1.8px;top:0;width:1.6px;height:4.4px;background:#fff;"></div></div><div class="t" style="left:24px;top:200.00px;letter-spacing:0.121px;transform:scaleY(1.12);transform-origin:0 4.9px;-webkit-text-stroke:0;color:#111;">2-16-2-L</div><div style="position:absolute;left:5px;top:213.75px;width:7px;height:1px;background:#d2d2d2;"></div><div style="position:absolute;left:11.1px;top:208.75px;width:9.9px;height:10.2px;background:#7b7b7b;border-top:1.3px solid #005c5c;"></div><div style="position:absolute;left:13.5px;top:211.46px;width:5.2px;height:6.6px;border-top:1.1px solid #fff;border-bottom:1.1px solid #fff;"><div style="position:absolute;left:1.8px;top:0;width:1.6px;height:4.4px;background:#fff;"></div></div><div class="t" style="left:24px;top:209.96px;letter-spacing:0.121px;transform:scaleY(1.12);transform-origin:0 4.9px;-webkit-text-stroke:0;color:#111;">2-16-3-L</div><div style="position:absolute;left:5px;top:223.71px;width:7px;height:1px;background:#d2d2d2;"></div><div style="position:absolute;left:11.1px;top:218.71px;width:9.9px;height:10.2px;background:#7b7b7b;border-top:1.3px solid #005c5c;"></div><div style="position:absolute;left:13.5px;top:221.41px;width:5.2px;height:6.6px;border-top:1.1px solid #fff;border-bottom:1.1px solid #fff;"><div style="position:absolute;left:1.8px;top:0;width:1.6px;height:4.4px;background:#fff;"></div></div><div class="t" style="left:24px;top:219.91px;letter-spacing:0.121px;transform:scaleY(1.12);transform-origin:0 4.9px;-webkit-text-stroke:0;color:#111;">2-16-4-L</div><div style="position:absolute;left:5px;top:233.67px;width:7px;height:1px;background:#d2d2d2;"></div><div style="position:absolute;left:11.1px;top:228.67px;width:9.9px;height:10.2px;background:#7b7b7b;border-top:1.3px solid #005c5c;"></div><div style="position:absolute;left:13.5px;top:231.37px;width:5.2px;height:6.6px;border-top:1.1px solid #fff;border-bottom:1.1px solid #fff;"><div style="position:absolute;left:1.8px;top:0;width:1.6px;height:4.4px;background:#fff;"></div></div><div class="t" style="left:24px;top:229.87px;letter-spacing:0.121px;transform:scaleY(1.12);transform-origin:0 4.9px;-webkit-text-stroke:0;color:#111;">2-17-1-L</div></div>
<svg style="left:0;top:262px;" width="470" height="306" viewBox="0 262 470 306"><path d="M455.8,291.2 L458.4,288.6 L461,291.2 M455.8,509.4 L458.4,512 L461,509.4 M386.2,518.8 L383.8,521.3 L386.2,523.8 M446,518.8 L448.4,521.3 L446,523.8" fill="none" stroke="#333" stroke-width="1.1"/></svg>
<div class="btn" style="left:380px;top:532.4px;width:84.4px;height:11.4px;"></div>
<div class="btn" style="left:380px;top:547.6px;width:37.6px;height:11.6px;"></div>
<div class="btn" style="left:427.4px;top:547.6px;width:37px;height:11.6px;"></div>
<div class="t" style="font-size:8.3px;letter-spacing:-0.270px;transform:scaleY(1.1);transform-origin:0 4.9px;left:391.60px;top:531.80px;text-shadow:0.15px 0 0 #000;">Remove Flooding</div>
<div class="t" style="font-size:8px;color:#a7a7a7;letter-spacing:-0.202px;transform:scaleY(1.17);transform-origin:0 4.9px;left:389.00px;top:548.40px;text-shadow:0.7px 0.7px 0 #fff;">Apply</div>
<div class="t" style="font-size:8px;color:#a7a7a7;letter-spacing:-0.180px;transform:scaleY(1.17);transform-origin:0 4.9px;left:436.20px;top:548.40px;text-shadow:0.7px 0.7px 0 #fff;">Reset</div>
<div style="position:absolute;left:6px;top:482.3px;width:319px;height:77px;overflow:hidden;background:#fff;"><div style="position:absolute;left:0;top:0;width:308.7px;height:27.6px;background:#f0f0f0;border-top:1px solid #4a4a4a;border-bottom:1.4px solid #2e2e2e;"></div><div style="position:absolute;left:0;top:1px;width:15px;height:66px;background:#f0f0f0;border-left:1px solid #6a6a6a;"></div><div style="position:absolute;left:14.4px;top:0;width:1.2px;height:27.6px;background:#454545;"></div><div style="position:absolute;left:15.8px;top:1px;width:1px;height:26px;background:#fff;"></div><div style="position:absolute;left:105.4px;top:0;width:1.2px;height:27.6px;background:#454545;"></div><div style="position:absolute;left:106.8px;top:1px;width:1px;height:26px;background:#fff;"></div><div style="position:absolute;left:180px;top:0;width:1.2px;height:27.6px;background:#454545;"></div><div style="position:absolute;left:181.4px;top:1px;width:1px;height:26px;background:#fff;"></div><div style="position:absolute;left:223.9px;top:0;width:1.2px;height:27.6px;background:#454545;"></div><div style="position:absolute;left:225.3px;top:1px;width:1px;height:26px;background:#fff;"></div><div style="position:absolute;left:267.4px;top:0;width:1.2px;height:27.6px;background:#454545;"></div><div style="position:absolute;left:268.8px;top:1px;width:1px;height:26px;background:#fff;"></div><div style="position:absolute;left:14.4px;top:27px;width:1.2px;height:40px;background:#555;"></div><div style="position:absolute;left:180.6px;top:28.4px;width:87.4px;height:38.6px;background:#c3c3c3;"></div><div style="position:absolute;left:0;top:39.2px;width:15px;height:1px;background:#858585;"></div><div style="position:absolute;left:15px;top:39.2px;width:165.6px;height:1px;background:#c6c6c6;"></div><div style="position:absolute;left:180.6px;top:39.2px;width:87.4px;height:1px;background:#9c9c9c;"></div><div style="position:absolute;left:268px;top:39.2px;width:40.7px;height:1px;background:#c6c6c6;"></div><div style="position:absolute;left:0;top:50.9px;width:15px;height:1px;background:#858585;"></div><div style="position:absolute;left:15px;top:50.9px;width:165.6px;height:1px;background:#c6c6c6;"></div><div style="position:absolute;left:180.6px;top:50.9px;width:87.4px;height:1px;background:#9c9c9c;"></div><div style="position:absolute;left:268px;top:50.9px;width:40.7px;height:1px;background:#c6c6c6;"></div><div style="position:absolute;left:0;top:62.6px;width:15px;height:1px;background:#858585;"></div><div style="position:absolute;left:15px;top:62.6px;width:165.6px;height:1px;background:#c6c6c6;"></div><div style="position:absolute;left:180.6px;top:62.6px;width:87.4px;height:1px;background:#9c9c9c;"></div><div style="position:absolute;left:268px;top:62.6px;width:40.7px;height:1px;background:#c6c6c6;"></div><div style="position:absolute;left:0;top:74.3px;width:15px;height:1px;background:#858585;"></div><div style="position:absolute;left:15px;top:74.3px;width:165.6px;height:1px;background:#c6c6c6;"></div><div style="position:absolute;left:180.6px;top:74.3px;width:87.4px;height:1px;background:#9c9c9c;"></div><div style="position:absolute;left:268px;top:74.3px;width:40.7px;height:1px;background:#c6c6c6;"></div><div style="position:absolute;left:105.5px;top:28.4px;width:1px;height:38.6px;background:#c6c6c6;"></div><div style="position:absolute;left:180.1px;top:28.4px;width:1px;height:38.6px;background:#9c9c9c;"></div><div style="position:absolute;left:224px;top:28.4px;width:1px;height:38.6px;background:#9c9c9c;"></div><div style="position:absolute;left:267.5px;top:28.4px;width:1px;height:38.6px;background:#9c9c9c;"></div><div class="t" style="font-size:8px;font-weight:bold;color:#1a1a1a;letter-spacing:-0.314px;left:50.80px;top:5.10px;">Space</div><div class="t" style="font-size:8px;font-weight:bold;color:#1a1a1a;letter-spacing:-0.447px;left:51.80px;top:14.60px;">Name</div><div class="t" style="font-size:8px;font-weight:bold;color:#1a1a1a;letter-spacing:-0.336px;left:131.45px;top:5.10px;">Type of</div><div class="t" style="font-size:8px;font-weight:bold;color:#1a1a1a;letter-spacing:-0.595px;left:129.70px;top:14.60px;">Flooding</div><div class="t" style="font-size:8px;font-weight:bold;color:#1a1a1a;letter-spacing:-0.620px;left:189.00px;top:5.10px;">Flooding</div><div class="t" style="font-size:8px;font-weight:bold;color:#1a1a1a;letter-spacing:-0.249px;left:189.60px;top:14.60px;">Percent</div><div class="t" style="font-size:8px;font-weight:bold;color:#1a1a1a;letter-spacing:-0.620px;left:232.40px;top:5.10px;">Flooding</div><div class="t" style="font-size:8px;font-weight:bold;color:#1a1a1a;letter-spacing:-0.412px;left:236.50px;top:14.60px;">Depth</div><div class="t" style="font-size:8px;font-weight:bold;color:#1a1a1a;letter-spacing:-0.319px;left:278.70px;top:5.10px;">Weight</div><div class="t" style="font-size:8px;font-weight:bold;color:#1a1a1a;letter-spacing:-0.386px;left:288.75px;top:14.60px;">T</div><div class="t" style="font-size:8px;color:#222;letter-spacing:-0.189px;left:72.10px;top:28.60px;">5-56-1-Q</div><div class="t" style="font-size:8px;color:#222;letter-spacing:-0.133px;left:108.80px;top:28.60px;">Free Comunicatio</div><div style="position:absolute;left:171.2px;top:28.8px;width:8.8px;height:9.8px;background:#f0f0f0;border:1px solid #fff;border-right-color:#777;border-bottom-color:#777;"></div><div style="position:absolute;left:173.4px;top:32.8px;width:0;height:0;border-left:2.2px solid transparent;border-right:2.2px solid transparent;border-top:2.4px solid #000;"></div><div class="t" style="font-size:8px;color:#222;letter-spacing:-0.078px;left:206.44px;top:28.60px;">4.34</div><div class="t" style="font-size:8px;color:#9a9a9a;letter-spacing:-0.267px;left:250.70px;top:28.60px;">0.00</div><div class="t" style="font-size:8px;font-weight:bold;color:#111;letter-spacing:-0.080px;left:288.58px;top:28.60px;">12.38</div><div class="t" style="font-size:8px;color:#222;letter-spacing:-0.189px;left:46.05px;top:40.70px;">5-56-3-Q</div><div class="t" style="font-size:8px;color:#222;letter-spacing:-0.133px;left:108.80px;top:40.70px;">Free Comunicatio</div><div style="position:absolute;left:171.2px;top:40.9px;width:8.8px;height:9.8px;background:#f0f0f0;border:1px solid #fff;border-right-color:#777;border-bottom-color:#777;"></div><div style="position:absolute;left:173.4px;top:44.9px;width:0;height:0;border-left:2.2px solid transparent;border-right:2.2px solid transparent;border-top:2.4px solid #000;"></div><div class="t" style="font-size:8px;color:#222;letter-spacing:-0.080px;left:202.08px;top:40.70px;">26.73</div><div class="t" style="font-size:8px;color:#9a9a9a;letter-spacing:-0.267px;left:250.70px;top:40.70px;">0.00</div><div class="t" style="font-size:8px;color:#111;letter-spacing:-0.080px;left:288.58px;top:40.70px;">54.66</div><div class="t" style="font-size:8px;color:#222;letter-spacing:-0.189px;left:46.05px;top:52.40px;">5-67-1-Q</div><div class="t" style="font-size:8px;color:#222;letter-spacing:-0.133px;left:108.80px;top:52.40px;">Free Comunicatio</div><div style="position:absolute;left:171.2px;top:52.6px;width:8.8px;height:9.8px;background:#f0f0f0;border:1px solid #fff;border-right-color:#777;border-bottom-color:#777;"></div><div style="position:absolute;left:173.4px;top:56.6px;width:0;height:0;border-left:2.2px solid transparent;border-right:2.2px solid transparent;border-top:2.4px solid #000;"></div><div class="t" style="font-size:8px;color:#222;letter-spacing:-0.078px;left:206.44px;top:52.40px;">3.73</div><div class="t" style="font-size:8px;color:#9a9a9a;letter-spacing:-0.267px;left:250.70px;top:52.40px;">0.00</div><div class="t" style="font-size:8px;color:#111;letter-spacing:-0.080px;left:288.58px;top:52.40px;">15.47</div><div class="t" style="font-size:8px;color:#222;letter-spacing:-0.189px;left:46.05px;top:64.10px;">5-67-3-Q</div><div class="t" style="font-size:8px;color:#222;letter-spacing:-0.133px;left:108.80px;top:64.10px;">Free Comunicatio</div><div style="position:absolute;left:171.2px;top:64.3px;width:8.8px;height:9.8px;background:#f0f0f0;border:1px solid #fff;border-right-color:#777;border-bottom-color:#777;"></div><div style="position:absolute;left:173.4px;top:68.3px;width:0;height:0;border-left:2.2px solid transparent;border-right:2.2px solid transparent;border-top:2.4px solid #000;"></div><div class="t" style="font-size:8px;color:#222;letter-spacing:-0.080px;left:202.08px;top:64.10px;">36.55</div><div class="t" style="font-size:8px;color:#9a9a9a;letter-spacing:-0.267px;left:250.70px;top:64.10px;">0.00</div><div class="t" style="font-size:8px;color:#111;letter-spacing:-0.080px;left:288.58px;top:64.10px;">84.46</div><div style="position:absolute;left:308.7px;top:0;width:10.3px;height:67px;background:#f0f0f0;"></div><div style="position:absolute;left:0;top:66.8px;width:319px;height:10.4px;background:#f0f0f0;"></div><div style="position:absolute;left:309.2px;top:12.2px;width:9px;height:9.2px;background:#cdcdcd;"></div><div style="position:absolute;left:12.2px;top:67.8px;width:170.6px;height:8.6px;background:#cdcdcd;"></div><svg style="left:0;top:0;" width="319" height="77"><path d="M311.2,8 L313.8,5.4 L316.4,8 M311.2,60.2 L313.8,62.8 L316.4,60.2 M7.4,69.4 L5,71.9 L7.4,74.4 M301.6,69.4 L304,71.9 L301.6,74.4" fill="none" stroke="#333" stroke-width="1.1"/></svg></div>
<div class="win frameI" style="left:472.6px;top:259px;width:345px;height:315px;border-color:#7f858d;"></div>
<svg style="left:479px;top:267.2px;" width="10" height="9.4" viewBox="0 0 10 9.4"><rect x="0" y="0" width="9.5" height="9" fill="#d3d3d3"/><path d="M0.9,2.3 H8.7 L7.6,5.2 Q6.4,8.2 4.8,8.5 Q3.2,8.2 2,5.2 Z" fill="#161616"/><rect x="3.9" y="3.1" width="1.9" height="1.5" fill="#e6e6e6"/><path d="M3.6,6.3 Q4.8,7.3 6,6.3" stroke="#d8d8d8" stroke-width="0.7" fill="none"/></svg>
<div class="t" style="font-size:7.4px;color:#a9a9a9;word-spacing:1.6px;letter-spacing:-0.234px;transform:scaleY(1.17);transform-origin:0 4.9px;left:491.30px;top:267.60px;">OOO - Damage 1</div>
<div class="cb" style="left:734px;top:265.8px;width:19.3px;height:11px;border-color:#a3b1c6;background:linear-gradient(#e6edf6,#d6e0ec);box-shadow:inset 0 0 0 0.6px rgba(255,255,255,0.55);"></div><div class="cb" style="left:755.3px;top:265.8px;width:19.3px;height:11px;border-color:#a3b1c6;background:linear-gradient(#e6edf6,#d6e0ec);box-shadow:inset 0 0 0 0.6px rgba(255,255,255,0.55);"></div><div class="cb" style="left:776.4px;top:265.8px;width:19.3px;height:11px;border-color:#a3b1c6;background:linear-gradient(#e6edf6,#d6e0ec);box-shadow:inset 0 0 0 0.6px rgba(255,255,255,0.55);"></div><svg style="left:734px;top:265.8px;" width="61.7" height="11"><rect x="6.25" y="5.4" width="6.8" height="2.5" rx="0.7" fill="#fff" stroke="#8693a6" stroke-width="0.7"/><rect x="27.25" y="3.2" width="7.4" height="5" rx="0.8" fill="#fff" stroke="#8693a6" stroke-width="0.7"/><rect x="29.45" y="5.1" width="3" height="1.5" fill="#b3bdcb"/><path d="M49.75,3.7 L54.35,7.5 M54.35,3.7 L49.75,7.5" stroke="#8693a6" stroke-width="2.3" stroke-linecap="square" fill="none"/><path d="M49.75,3.7 L54.35,7.5 M54.35,3.7 L49.75,7.5" stroke="#fff" stroke-width="1.25" stroke-linecap="square" fill="none"/></svg>
<div class="client" style="left:477.4px;top:279.4px;width:319.3px;height:285.2px;border:1px solid #85898f;border-right-color:#f8fafc;border-bottom-color:#f8fafc;"></div>
<div class="btn" style="left:482.8px;top:283.7px;width:42.9px;height:13.4px;"></div>
<div class="t" style="font-size:6.4px;color:#111;letter-spacing:-0.082px;left:496.00px;top:285.80px;-webkit-text-stroke:0.08px #111;">Zoom In</div>
<div class="btn" style="left:527px;top:283.7px;width:43px;height:13.4px;"></div>
<div class="t" style="font-size:6.4px;color:#111;letter-spacing:-0.206px;left:540.50px;top:285.80px;-webkit-text-stroke:0.08px #111;">Zoom Out</div>
<div class="btn" style="left:571.6px;top:283.7px;width:43.4px;height:13.4px;"></div>
<div class="t" style="font-size:6.4px;color:#111;letter-spacing:-0.156px;left:585.20px;top:285.80px;-webkit-text-stroke:0.08px #111;">Zoom Fit</div>
<div class="btn" style="left:620.9px;top:283.7px;width:42.1px;height:13.4px;"></div>
<div class="t" style="font-size:6.4px;color:#111;letter-spacing:-0.353px;left:636.00px;top:285.80px;-webkit-text-stroke:0.08px #111;">Submit</div>
<div class="btn" style="left:665px;top:283.7px;width:42.5px;height:13.4px;"></div>
<div class="t" style="font-size:6.4px;color:#111;letter-spacing:-0.204px;left:680.60px;top:285.80px;-webkit-text-stroke:0.08px #111;">Reset</div>
<div class="btn" style="left:709px;top:283.7px;width:43.6px;height:13.4px;"></div>
<div class="t" style="font-size:6.4px;color:#111;letter-spacing:-0.255px;left:723.50px;top:285.80px;-webkit-text-stroke:0.08px #111;">Remove</div>
<div style="position:absolute;left:758.2px;top:283.7px;width:34.4px;height:13.4px;overflow:hidden;"><div class="btn" style="left:0;top:0;width:50px;height:13.4px;"></div></div>
<div style="position:absolute;left:778.3px;top:283px;width:14.4px;height:14px;overflow:hidden;"><div class="t" style="left:0.2px;top:2.9px;font-size:6.9px;transform:scaleY(1.14);transform-origin:0 4.6px;">Expo</div></div>
<svg style="left:472px;top:262px;" width="328" height="306" viewBox="472 262 328 306"><circle cx="488.8" cy="288.5" r="3" fill="none" stroke="#000" stroke-width="1.3"/><path d="M491,290.8 L494.4,294.6" stroke="#000" stroke-width="1.7"/><path d="M487.4,288.6 H490.2" stroke="#000" stroke-width="0.7"/><path d="M488.8,287.2 V290" stroke="#000" stroke-width="0.7"/><circle cx="533" cy="288.5" r="3" fill="none" stroke="#000" stroke-width="1.3"/><path d="M535.2,290.8 L538.6,294.6" stroke="#000" stroke-width="1.7"/><path d="M531.6,288.6 H534.4" stroke="#000" stroke-width="0.7"/><rect x="574.4" y="285.8" width="8.6" height="8.6" fill="#f4f4f4" stroke="#222" stroke-width="0.9"/><rect x="574.4" y="285.8" width="8.6" height="2" fill="#20308a"/><rect x="576" y="289.4" width="5.4" height="3.6" fill="#c8c8d8"/><path d="M576.6,292.6 L580.8,289.8" stroke="#c02020" stroke-width="0.9"/><path d="M623.2,285.9 h9.6 v3.6 q0,3.8 -4.8,5.3 q-4.8,-1.5 -4.8,-5.3 Z" fill="#f6f6f6" stroke="#1a1a1a" stroke-width="0.9"/><rect x="623.2" y="285.6" width="9.6" height="1.9" fill="#111"/><path d="M623.8,291.3 h8.4 q-0.6,2 -4.2,3.2 q-3.6,-1.2 -4.2,-3.2 Z" fill="#8e8e8e"/><path d="M628,287.4 v3.8 M624.4,289.3 h3" stroke="#222" stroke-width="0.8"/><rect x="628.8" y="288.3" width="2.8" height="2.2" fill="#f01010"/><path d="M667.6,285.9 h9.6 v3.6 q0,3.8 -4.8,5.3 q-4.8,-1.5 -4.8,-5.3 Z" fill="#f6f6f6" stroke="#1a1a1a" stroke-width="0.9"/><rect x="667.6" y="285.6" width="9.6" height="1.9" fill="#111"/><path d="M668.2,291.3 h8.4 q-0.6,2 -4.2,3.2 q-3.6,-1.2 -4.2,-3.2 Z" fill="#8e8e8e"/><path d="M672.4,287.4 v3.8 M668.8,289.3 h3" stroke="#222" stroke-width="0.8"/><rect x="673.2" y="288.3" width="2.8" height="2.2" fill="#f01010"/><path d="M712,285.9 h9.6 v3.6 q0,3.8 -4.8,5.3 q-4.8,-1.5 -4.8,-5.3 Z" fill="#f6f6f6" stroke="#1a1a1a" stroke-width="0.9"/><rect x="712" y="285.6" width="9.6" height="1.9" fill="#111"/><path d="M712.6,291.3 h8.4 q-0.6,2 -4.2,3.2 q-3.6,-1.2 -4.2,-3.2 Z" fill="#8e8e8e"/><path d="M716.8,287.4 v3.8 M713.2,289.3 h3" stroke="#222" stroke-width="0.8"/><path d="M717.6,289.3 h3" stroke="#222" stroke-width="0.8"/><rect x="760.8" y="286" width="8.4" height="8.4" fill="#151515"/><rect x="762.6" y="286.6" width="4.6" height="3" fill="#d8d8d8"/><rect x="762.2" y="291.2" width="5" height="3.2" fill="#8a8a20"/><path d="M769.2,290.2 L773,287.4 V289.4 H778 V291 H773 V293 Z" fill="#0000e0"/></svg>
<div style="position:absolute;left:486.6px;top:304.6px;width:93px;height:13.6px;background:#f3f3f3;border-top:1px solid #fafafa;"></div>
<div style="position:absolute;left:579.4px;top:302.6px;width:65.6px;height:16px;background:#f0f0f0;border-top:1px solid #fff;border-left:1px solid #fff;border-right:1.4px solid #5a5a5a;"></div>
<div class="t" style="font-size:6.5px;color:#222;letter-spacing:-0.405px;left:490.20px;top:306.50px;-webkit-text-stroke:0.05px #222;">HSSS Long. Damage Zones</div>
<div class="t" style="font-size:7.2px;font-weight:bold;letter-spacing:0.058px;left:583.00px;top:305.40px;">Fr 74.4 - Fr 55.2</div>
<div style="position:absolute;left:481.4px;top:317.6px;width:313.2px;height:245px;background:#fff;border:1.5px solid #5c5c5c;border-right-width:1.6px;"></div>
<div style="position:absolute;left:482.9px;top:549.9px;width:310.1px;height:11.2px;background:#f0f0f0;"></div>
<div style="position:absolute;left:492.8px;top:551px;width:75.4px;height:9px;background:#cdcdcd;"></div>
<svg style="left:472px;top:262px;" width="328" height="306" viewBox="472 262 328 306"><path d="M488.4,552.9 L486,555.4 L488.4,557.9 M785,552.9 L787.4,555.4 L785,557.9" fill="none" stroke="#333" stroke-width="1.1"/><path d="M513.6,338.8 L747.5,338.8 M513.6,338.8 L517.2,359.6 L528.9,384.7 L538.4,410.3 L540.1,431.5 L542.7,448 L544.4,457.7 L545.9,463 L550,469.4 L556.5,475.7 L565,481.7 L573.5,484.7 M517.2,359.6 L743.7,359.6 M528.9,384.7 L568.8,384.7 L568.8,386.8 M561.8,359.6 L561.8,410.3 M538.4,410.3 L681.6,410.3 M540.1,431.5 L681.6,431.5 M544.4,457.7 L581.6,457.7 M581.6,410.3 L581.6,478 M747.5,338.8 L743.7,359.6 L740.5,384.7 L738.4,399 M713.5,359.6 L713.5,399 M713.5,384.7 L740.5,384.7" fill="none" stroke="#1c1c1c" stroke-width="0.85"/><path d="M513.6,338.8 L747.5,338.8 M513.6,338.8 L517.2,359.6 L528.9,384.7 L538.4,410.3 L540.1,431.5 L542.7,448 L544.4,457.7 L545.9,463 L550,469.4 L556.5,475.7 L565,481.7 L573.5,484.7 M517.2,359.6 L743.7,359.6 M528.9,384.7 L568.8,384.7 L568.8,386.8 M561.8,359.6 L561.8,410.3 M538.4,410.3 L681.6,410.3 M540.1,431.5 L681.6,431.5 M544.4,457.7 L581.6,457.7 M581.6,410.3 L581.6,478 M747.5,338.8 L743.7,359.6 L740.5,384.7 L738.4,399 M713.5,359.6 L713.5,399 M713.5,384.7 L740.5,384.7" fill="none" stroke="#1a1a1a" stroke-width="1.5" stroke-dasharray="1.15 2.1" transform="translate(-0.55,0.8)"/><path d="M637.6,338.8 v3 M670.4,338.8 v2.4 M637.6,410.3 v3 M637.6,431.5 v3 M561.8,410.3 v2.4" stroke="#111" stroke-width="1"/><path d="M681.6,410.3 L736,410.3 M681.6,431.5 L734,431.5 M694.4,457.7 L730,457.7 M694.4,410.3 L694.4,478 M713.5,399 L713.5,410.3 M738.4,399 L736.4,410.3 L735,430 L732.5,447.5 L730,457.5 L725.5,467.5 L720,475 L712.5,481 L702.5,485" fill="none" stroke="#ff3030" stroke-width="0.7"/><path d="M681.6,410.3 L736,410.3 M681.6,431.5 L734,431.5 M694.4,457.7 L730,457.7 M694.4,410.3 L694.4,478 M713.5,399 L713.5,410.3 M738.4,399 L736.4,410.3 L735,430 L732.5,447.5 L730,457.5 L725.5,467.5 L720,475 L712.5,481 L702.5,485" fill="none" stroke="#ff1010" stroke-width="1.5" stroke-dasharray="1.15 2.1" transform="translate(-0.55,0.8)"/><path d="M637.6,331 V490 M502.3,485.5 H758.5" fill="none" stroke="#ff00ff" stroke-width="1.1" stroke-dasharray="1.1 2"/><path d="M580.2,478.3 H693.9 V485.3 H575 M580.2,478.3 V485.3 M587,478.3 V485.3 M596.1,478.3 V485.3 M600.4,478.3 V485.3 M609.9,478.3 V485.3 M622.7,478.3 V485.3 M631.2,478.3 V485.3 M635.4,478.3 V485.3 M654.6,478.3 V485.3 M664.1,478.3 V485.3 M673.7,478.3 V485.3 M687.5,478.3 V485.3" fill="none" stroke="#ff0000" stroke-width="0.7"/><path d="M574.9,472.4 H651.8 V492 H574.9 Z M644.6,492 V465.4 H707.4 V492 M681.6,492 V399.2 H748 V492 H651.8" fill="none" stroke="#ff0000" stroke-width="1.6" stroke-linejoin="miter"/></svg>
<div class="t" style="font-size:10px;font-weight:bold;color:#ff00ff;left:543.60px;top:483.80px;">P</div>
<div class="t" style="font-size:10px;font-weight:bold;color:#ff00ff;left:715.00px;top:484.00px;">S</div>
<div class="t" style="font-size:11px;font-weight:bold;color:#ff00ff;letter-spacing:-0.038px;left:619.50px;top:494.40px;">Fr 69.6</div>
</div></body></html>
